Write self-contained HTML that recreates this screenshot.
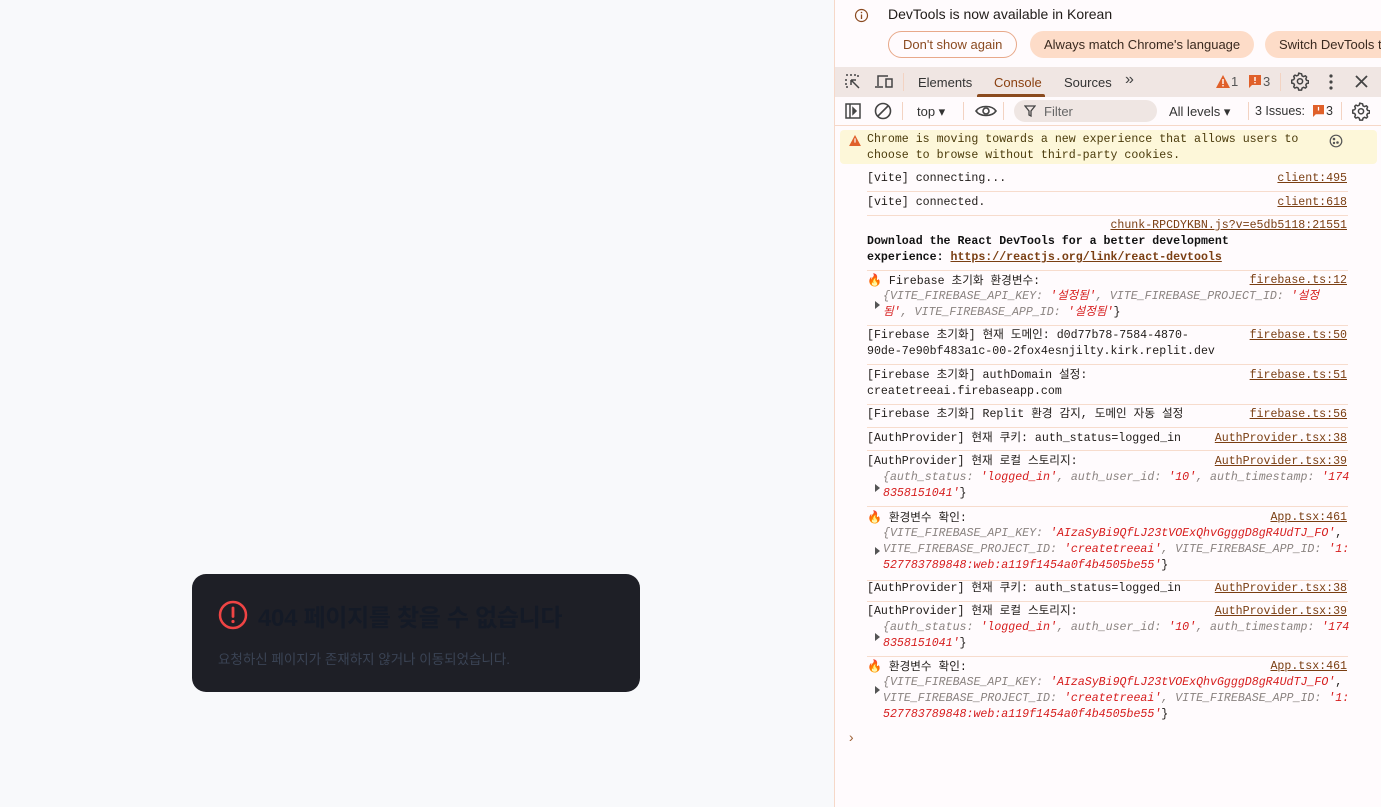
<!DOCTYPE html>
<html><head><meta charset="utf-8">
<style>
*{margin:0;padding:0;box-sizing:border-box}
body{width:1381px;height:807px;overflow:hidden;background:#f8f9fb;position:relative;font-family:"Liberation Sans","Noto Sans CJK KR",sans-serif}
.card{position:absolute;left:192px;top:574px;width:448px;height:118px;background:#1e1f26;border-radius:14px}
.card .t{position:absolute;left:66px;top:24px;font-size:24px;font-weight:bold;color:#141a26;letter-spacing:-0.3px}
.card .d{position:absolute;left:26px;top:74px;font-size:13.5px;color:#3a4354}
.dt{position:absolute;left:834px;top:0;width:547px;height:807px;background:#fffbfd;border-left:1px solid #f6d8c8;font-family:"Liberation Sans","Noto Sans CJK KR",sans-serif;color:#1f1b18}
.ab{position:absolute;white-space:nowrap}
.btn{position:absolute;top:31px;height:27px;border-radius:14px;font-size:13px;line-height:27px;padding:0 14px;color:#3a2a20;background:#fddcc8}
.tb1{position:absolute;left:0;top:67px;width:547px;height:30px;background:#f0e6e3}
.tb2{position:absolute;left:0;top:97px;width:547px;height:29px;border-bottom:1px solid #f6d8c8;background:#fffbfd}
.sep{position:absolute;width:1px;background:#f3d3c2}
.mono{font-family:"Liberation Mono","Noto Sans CJK KR",monospace;font-size:11.6px;line-height:16px}
.l{position:absolute;left:32px;white-space:nowrap}
.r{position:absolute;right:34px;white-space:nowrap;text-decoration:underline;color:#7a3e12}
.hr{position:absolute;left:32px;width:481px;height:1px;background:#f7dccd}
.g{color:#8a8380;font-style:italic}
.s{color:#d61c1c;font-style:italic}
.tri{position:absolute;left:40px;width:0;height:0;border-top:4px solid transparent;border-bottom:4px solid transparent;border-left:5px solid #555}
.fire{font-size:12px}
</style></head><body>
<svg width="0" height="0" style="position:absolute"><defs><g id="gear"><path d="M9 1.5l1.6.3.4 2 1.5.8 1.9-.8 1.2 1.2-.8 1.9.8 1.5 2 .4v2.3l-2 .4-.8 1.5.8 1.9-1.2 1.2-1.9-.8-1.5.8-.4 2H7.7l-.4-2-1.5-.8-1.9.8-1.2-1.2.8-1.9-.8-1.5-2-.4V8.1l2-.4.8-1.5-.8-1.9 1.2-1.2 1.9.8 1.5-.8.4-2z" fill="none" stroke="#444" stroke-width="1.5" stroke-linejoin="round"/><circle cx="9" cy="9.3" r="2.6" fill="none" stroke="#444" stroke-width="1.5"/></g></defs></svg>
<div class="card">
  <svg style="position:absolute;left:26px;top:26px" width="30" height="30" viewBox="0 0 30 30"><circle cx="15" cy="15" r="13" fill="none" stroke="#ef4444" stroke-width="2.5"/><line x1="15" y1="8" x2="15" y2="16.5" stroke="#ef4444" stroke-width="2.8" stroke-linecap="round"/><circle cx="15" cy="21.5" r="1.6" fill="#ef4444"/></svg>
  <div class="t">404 페이지를 찾을 수 없습니다</div>
  <div class="d">요청하신 페이지가 존재하지 않거나 이동되었습니다.</div>
</div>

<div class="dt">
  <svg class="ab" style="left:19px;top:8px" width="15" height="15" viewBox="0 0 15 15"><circle cx="7.5" cy="7.5" r="6" fill="none" stroke="#8a4a20" stroke-width="1.2"/><line x1="7.5" y1="6.5" x2="7.5" y2="11" stroke="#8a4a20" stroke-width="1.3"/><circle cx="7.5" cy="4.5" r=".8" fill="#8a4a20"/></svg>
  <div class="ab" style="left:53px;top:6px;font-size:14px">DevTools is now available in Korean</div>
  <div class="btn" style="left:53px;background:#fffbfd;border:1px solid #e8a98a;color:#8a4a20;line-height:25px">Don't show again</div>
  <div class="btn" style="left:195px">Always match Chrome's language</div>
  <div class="btn" style="left:430px;width:140px">Switch DevTools to</div>

  <div class="tb1">
    <svg class="ab" style="left:9px;top:6px" width="18" height="18" viewBox="0 0 18 18" fill="none" stroke="#444" stroke-width="1.5"><path d="M2 2h2M6 2h2M10 2h2M14 2v2M2 6v2M2 10v2M2 14h2M7 7l8 8M7 7v5M7 7h5"/></svg>
    <svg class="ab" style="left:39px;top:6px" width="20" height="18" viewBox="0 0 20 18" fill="none" stroke="#444" stroke-width="1.5"><path d="M4 13V3h10M1 14h8"/><rect x="12" y="6" width="6" height="8"/></svg>
    <div class="sep" style="left:68px;top:6px;height:18px"></div>
    <div class="ab" style="left:83px;top:8px;font-size:13px;color:#333">Elements</div>
    <div class="ab" style="left:159px;top:8px;font-size:13px;color:#8a4010">Console</div>
    <div class="ab" style="left:142px;top:27px;width:68px;height:3px;background:#8a4a1e;border-radius:2px 2px 0 0"></div>
    <div class="ab" style="left:229px;top:8px;font-size:13px;color:#333">Sources</div>
    <div class="ab" style="left:290px;top:4px;font-size:16px;color:#444">»</div>
    <svg class="ab" style="left:381px;top:8px" width="14" height="13" viewBox="0 0 14 13"><path d="M7 0L14 13H0z" fill="#e0602a"/><rect x="6.3" y="4" width="1.4" height="5" fill="#fff"/><rect x="6.3" y="10" width="1.4" height="1.4" fill="#fff"/></svg>
    <div class="ab" style="left:396px;top:7px;font-size:13px;color:#555">1</div>
    <svg class="ab" style="left:414px;top:8px" width="12" height="13" viewBox="0 0 12 13"><path d="M0 0h12v10H3l-3 3z" fill="#e0602a"/><rect x="5.3" y="2" width="1.4" height="4" fill="#fff"/><rect x="5.3" y="7" width="1.4" height="1.4" fill="#fff"/></svg>
    <div class="ab" style="left:428px;top:7px;font-size:13px;color:#555">3</div>
    <div class="sep" style="left:445px;top:6px;height:18px"></div>
    <svg class="ab" style="left:456px;top:5px" width="18" height="19" viewBox="0 0 18 19"><use href="#gear"/></svg>
    <svg class="ab" style="left:494px;top:7px" width="4" height="16" viewBox="0 0 4 16"><circle cx="2" cy="2" r="1.6" fill="#444"/><circle cx="2" cy="8" r="1.6" fill="#444"/><circle cx="2" cy="14" r="1.6" fill="#444"/></svg>
    <svg class="ab" style="left:520px;top:8px" width="13" height="13" viewBox="0 0 13 13" stroke="#444" stroke-width="1.8"><path d="M1 1l11 11M12 1L1 12"/></svg>
  </div>

  <div class="tb2">
    <svg class="ab" style="left:10px;top:6px" width="16" height="16" viewBox="0 0 16 16" fill="none" stroke="#444" stroke-width="1.5"><rect x="1" y="1" width="14" height="14"/><line x1="5" y1="1" x2="5" y2="15"/><path d="M8 5l3 3-3 3z" fill="#444"/></svg>
    <svg class="ab" style="left:39px;top:5px" width="18" height="18" viewBox="0 0 18 18" fill="none" stroke="#444" stroke-width="1.6"><circle cx="9" cy="9" r="7.5"/><line x1="4" y1="14" x2="14" y2="4"/></svg>
    <div class="sep" style="left:67px;top:5px;height:18px"></div>
    <div class="ab" style="left:82px;top:7px;font-size:13px;color:#333">top ▾</div>
    <div class="sep" style="left:128px;top:5px;height:18px"></div>
    <svg class="ab" style="left:140px;top:7px" width="22" height="14" viewBox="0 0 22 14" fill="none" stroke="#444" stroke-width="1.6"><path d="M1 7C5 1 17 1 21 7C17 13 5 13 1 7z"/><circle cx="11" cy="7" r="3"/></svg>
    <div class="sep" style="left:168px;top:5px;height:18px"></div>
    <div class="ab" style="left:179px;top:3px;width:143px;height:22px;border-radius:11px;background:#efe6e3"></div>
    <svg class="ab" style="left:189px;top:8px" width="12" height="12" viewBox="0 0 12 12" fill="none" stroke="#444" stroke-width="1.3"><path d="M1 1h10L7 6v5L5 10V6z"/></svg>
    <div class="ab" style="left:209px;top:7px;font-size:13px;color:#666">Filter</div>
    <div class="ab" style="left:334px;top:7px;font-size:13px;color:#333">All levels ▾</div>
    <div class="sep" style="left:413px;top:5px;height:18px"></div>
    <div class="ab" style="left:420px;top:7px;font-size:12.5px;color:#333">3 Issues:</div>
    <svg class="ab" style="left:478px;top:8px" width="11" height="12" viewBox="0 0 12 13"><path d="M0 0h12v10H3l-3 3z" fill="#e0602a"/><rect x="5.3" y="2" width="1.4" height="4" fill="#fff"/></svg>
    <div class="ab" style="left:491px;top:7px;font-size:12.5px;color:#333">3</div>
    <div class="sep" style="left:506px;top:5px;height:18px"></div>
    <svg class="ab" style="left:517px;top:5px" width="18" height="19" viewBox="0 0 18 19"><use href="#gear"/></svg>
  </div>

  <div class="mono">
    <div class="ab" style="left:5px;top:130px;width:537px;height:34px;background:#fdf7d9;border-radius:4px"></div>
    <svg class="ab" style="left:14px;top:135px" width="12" height="11" viewBox="0 0 14 13"><path d="M7 0L14 13H0z" fill="#e0602a"/><rect x="6.3" y="4" width="1.4" height="5" fill="#fff"/></svg>
    <div class="l" style="top:132px;color:#4a3a0a">Chrome is moving towards a new experience that allows users to<br>choose to browse without third-party cookies.</div>
    <svg class="ab" style="left:494px;top:134px" width="14" height="14" viewBox="0 0 14 14" fill="none" stroke="#555" stroke-width="1.2"><circle cx="7" cy="7" r="5.8"/><circle cx="5" cy="5" r=".7" fill="#555"/><circle cx="8.5" cy="8.5" r=".7" fill="#555"/><circle cx="5" cy="9" r=".6" fill="#555"/></svg>

    <div class="l" style="top:171px">[vite] connecting...</div><div class="r" style="top:171px">client:495</div>
    <div class="hr" style="top:191px"></div>
    <div class="l" style="top:195px">[vite] connected.</div><div class="r" style="top:195px">client:618</div>
    <div class="hr" style="top:215px"></div>
    <div class="r" style="top:218px">chunk-RPCDYKBN.js?v=e5db5118:21551</div>
    <div class="l" style="top:234px;font-weight:bold;color:#111">Download the React DevTools for a better development<br>experience: <span style="text-decoration:underline;color:#7a3e12">https://reactjs.org/link/react-devtools</span></div>
    <div class="hr" style="top:270px"></div>
    <div class="l" style="top:273px"><span class="fire">🔥</span> Firebase 초기화 환경변수:</div><div class="r" style="top:273px">firebase.ts:12</div>
    <div class="tri" style="top:301px"></div>
    <div class="l" style="left:48px;top:289px"><span class="g">{VITE_FIREBASE_API_KEY: </span><span class="s">'설정됨'</span><span class="g">, VITE_FIREBASE_PROJECT_ID: </span><span class="s">'설정</span><br><span class="s">됨'</span><span class="g">, VITE_FIREBASE_APP_ID: </span><span class="s">'설정됨'</span>}</div>
    <div class="hr" style="top:325px"></div>
    <div class="l" style="top:328px">[Firebase 초기화] 현재 도메인: d0d77b78-7584-4870-<br>90de-7e90bf483a1c-00-2fox4esnjilty.kirk.replit.dev</div><div class="r" style="top:328px">firebase.ts:50</div>
    <div class="hr" style="top:364px"></div>
    <div class="l" style="top:368px">[Firebase 초기화] authDomain 설정:<br>createtreeai.firebaseapp.com</div><div class="r" style="top:368px">firebase.ts:51</div>
    <div class="hr" style="top:404px"></div>
    <div class="l" style="top:407px">[Firebase 초기화] Replit 환경 감지, 도메인 자동 설정</div><div class="r" style="top:407px">firebase.ts:56</div>
    <div class="hr" style="top:427px"></div>
    <div class="l" style="top:431px">[AuthProvider] 현재 쿠키: auth_status=logged_in</div><div class="r" style="top:431px">AuthProvider.tsx:38</div>
    <div class="hr" style="top:450px"></div>
    <div class="l" style="top:454px">[AuthProvider] 현재 로컬 스토리지:</div><div class="r" style="top:454px">AuthProvider.tsx:39</div>
    <div class="tri" style="top:484px"></div>
    <div class="l" style="left:48px;top:470px"><span class="g">{auth_status: </span><span class="s">'logged_in'</span><span class="g">, auth_user_id: </span><span class="s">'10'</span><span class="g">, auth_timestamp: </span><span class="s">'174</span><br><span class="s">8358151041'</span>}</div>
    <div class="hr" style="top:506px"></div>
    <div class="l" style="top:510px"><span class="fire">🔥</span> 환경변수 확인:</div><div class="r" style="top:510px">App.tsx:461</div>
    <div class="tri" style="top:547px"></div>
    <div class="l" style="left:48px;top:526px"><span class="g">{VITE_FIREBASE_API_KEY: </span><span class="s">'AIzaSyBi9QfLJ23tVOExQhvGgggD8gR4UdTJ_FO'</span>,</div>
    <div class="l" style="left:48px;top:542px"><span class="g">VITE_FIREBASE_PROJECT_ID: </span><span class="s">'createtreeai'</span><span class="g">, VITE_FIREBASE_APP_ID: </span><span class="s">'1:</span><br><span class="s">527783789848:web:a119f1454a0f4b4505be55'</span>}</div>
    <div class="hr" style="top:580px"></div>
    <div class="l" style="top:581px">[AuthProvider] 현재 쿠키: auth_status=logged_in</div><div class="r" style="top:581px">AuthProvider.tsx:38</div>
    <div class="hr" style="top:601px"></div>
    <div class="l" style="top:604px">[AuthProvider] 현재 로컬 스토리지:</div><div class="r" style="top:604px">AuthProvider.tsx:39</div>
    <div class="tri" style="top:633px"></div>
    <div class="l" style="left:48px;top:620px"><span class="g">{auth_status: </span><span class="s">'logged_in'</span><span class="g">, auth_user_id: </span><span class="s">'10'</span><span class="g">, auth_timestamp: </span><span class="s">'174</span><br><span class="s">8358151041'</span>}</div>
    <div class="hr" style="top:656px"></div>
    <div class="l" style="top:659px"><span class="fire">🔥</span> 환경변수 확인:</div><div class="r" style="top:659px">App.tsx:461</div>
    <div class="tri" style="top:686px"></div>
    <div class="l" style="left:48px;top:675px"><span class="g">{VITE_FIREBASE_API_KEY: </span><span class="s">'AIzaSyBi9QfLJ23tVOExQhvGgggD8gR4UdTJ_FO'</span>,</div>
    <div class="l" style="left:48px;top:691px"><span class="g">VITE_FIREBASE_PROJECT_ID: </span><span class="s">'createtreeai'</span><span class="g">, VITE_FIREBASE_APP_ID: </span><span class="s">'1:</span><br><span class="s">527783789848:web:a119f1454a0f4b4505be55'</span>}</div>
    <div class="ab" style="left:12px;top:731px;color:#a0643a;font-size:14px">›</div>
  </div>
</div>
</body></html>
